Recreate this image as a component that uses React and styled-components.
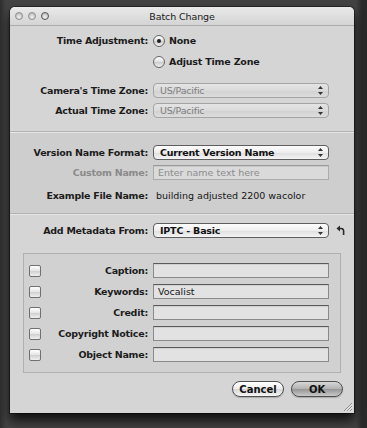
import React from 'react';
import styled, { createGlobalStyle } from 'styled-components';

const Global = createGlobalStyle`
  html, body { margin: 0; padding: 0; }
  body {
    width: 367px; height: 428px; overflow: hidden;
    background: #3a3a3a;
    font-family: "DejaVu Sans", "Liberation Sans", sans-serif;
  }
`;

const Screen = styled.div`
  width: 367px; height: 428px; box-sizing: border-box;
  padding: 7px 0 0 10px;
  background: linear-gradient(90deg, #2e2e2e 0px, #424242 6px, #424242 356px, #2a2a2a 362px);
`;

const Window = styled.div`
  position: relative;
  width: 344px; height: 406px;
  display: flex; flex-direction: column;
  background: #d5d5d5;
  border-radius: 5px 5px 0 0;
  box-shadow: 0 7px 12px rgba(0,0,0,0.8), 0 0 0 1px rgba(0,0,0,0.4);
  overflow: hidden;
`;

const TitleBar = styled.div`
  height: 18px;
  display: grid; grid-template-columns: 1fr auto 1fr; align-items: center;
  background: linear-gradient(#e9e9e9, #d4d4d4);
  border-bottom: 1px solid #adadad;
`;

const Lights = styled.div`
  display: flex; gap: 5px; padding-left: 5px;
`;

const Light = styled.span`
  width: 8px; height: 8px; border-radius: 50%;
  box-sizing: border-box;
  border: 1px solid ${p => (p.$dark ? '#555' : '#8c8c8c')};
  background: radial-gradient(circle at 50% 70%, #f4f4f4, #c2c2c2 70%);
`;

const Title = styled.div`
  font-size: 9.5px; color: #1a1a1a; letter-spacing: -0.1px;
`;

const Section = styled.div`
  display: flex; flex-direction: column;
  padding: ${p => p.$pad};
  background: ${p => p.$bg || '#d5d5d5'};
  border-top: ${p => (p.$divided ? '1px solid #b2b2b2' : 'none')};
  box-shadow: ${p => (p.$divided ? 'inset 0 1px 0 #e6e6e6' : 'none')};
  flex: ${p => (p.$grow ? 1 : 'none')};
`;

const Row = styled.div`
  display: flex; align-items: center; gap: 5px;
  height: 15px;
  margin-top: ${p => p.$mt || 0}px;
`;

const Label = styled.div`
  width: ${p => p.$w || 138}px; flex-shrink: 0;
  text-align: right; white-space: nowrap;
  font-size: 9.5px; font-weight: bold; letter-spacing: -0.25px;
  color: ${p => (p.$disabled ? '#8a8a8a' : '#1c1c1c')};
`;

const RadioWrap = styled.div`
  display: flex; align-items: center; gap: 4px;
  font-size: 9.5px; font-weight: bold; color: #1c1c1c; letter-spacing: -0.2px;
`;

const RadioDot = styled.span`
  width: 12px; height: 12px; border-radius: 50%; box-sizing: border-box;
  border: 1px solid #666;
  background: linear-gradient(#ffffff, #e0e0e0 50%, #c9c9c9 51%, #f2f2f2);
  display: flex; align-items: center; justify-content: center;
  &::after {
    content: '';
    width: 4px; height: 4px; border-radius: 50%;
    background: #1e1e1e;
    display: ${p => (p.$on ? 'block' : 'none')};
  }
`;

const Popup = styled.div`
  width: 176px; height: 15px; box-sizing: border-box;
  display: flex; align-items: center; justify-content: space-between;
  padding: 0 5px 0 6px;
  border: 1px solid ${p => (p.$disabled ? '#a4a4a4' : '#5e5e5e')};
  border-radius: 4px;
  background: ${p => (p.$disabled
    ? 'linear-gradient(#e4e4e4, #dadada 50%, #d2d2d2 51%, #dcdcdc)'
    : 'linear-gradient(#fdfdfd, #eeeeee 50%, #dedede 51%, #f4f4f4)')};
  font-size: 9.5px; letter-spacing: -0.2px;
  font-weight: ${p => (p.$bold ? 'bold' : 'normal')};
  color: ${p => (p.$disabled ? '#7e7e7e' : '#121212')};
  white-space: nowrap;
`;

const Field = styled.div`
  width: 176px; height: 15px; box-sizing: border-box;
  display: flex; align-items: center;
  padding: 0 4px;
  border: 1px solid ${p => (p.$disabled ? '#ababab' : '#8a8a8a')};
  border-top-color: ${p => (p.$disabled ? '#9a9a9a' : '#5a5a5a')};
  background: ${p => (p.$disabled ? '#dadada' : '#e2e2e2')};
  box-shadow: inset 0 1px 0 rgba(0,0,0,0.08);
  font-size: 9.5px;
  color: ${p => (p.$placeholder ? '#8c8c8c' : '#161616')};
  white-space: nowrap;
`;

const Value = styled.div`
  font-size: 9.5px; color: #161616; padding-left: 3px; white-space: nowrap;
`;

const Group = styled.div`
  margin: 15px 0 0 13px;
  width: 318px; box-sizing: border-box;
  display: flex; flex-direction: column; gap: 6px;
  padding: 9px 0 10px 5px;
  border: 1px solid #b0b0b0;
  background: #d1d1d1;
`;

const GroupRow = styled.div`
  display: flex; align-items: center; gap: 5px; height: 15px;
`;

const Check = styled.span`
  width: 12px; height: 12px; box-sizing: border-box; flex-shrink: 0;
  margin-right: -5px;
  border: 1px solid #707070; border-radius: 2px;
  background: linear-gradient(#ffffff, #e4e4e4 50%, #cfcfcf 51%, #f0f0f0);
`;

const Buttons = styled.div`
  display: flex; justify-content: flex-end; gap: 7px;
  margin-top: 8px; padding-right: 11px;
`;

const Button = styled.div`
  width: 52px; height: 16px; box-sizing: border-box;
  border-radius: 8px;
  border: 1px solid #4f4f4f;
  display: flex; align-items: center; justify-content: center;
  font-size: 10px; font-weight: bold; color: #111;
  background: ${p => (p.$default
    ? 'linear-gradient(#d8d8d8, #b0b0b0 50%, #959595 51%, #c9c9c9)'
    : 'linear-gradient(#ffffff, #ececec 50%, #d6d6d6 51%, #f6f6f6)')};
  box-shadow: 0 1px 1px rgba(0,0,0,0.2);
`;

const Grip = styled.svg`
  position: absolute; right: 1px; bottom: 1px;
`;

const Revert = styled.svg`
  margin-left: 2px; flex-shrink: 0;
`;

const Arrows = () => (
  <svg width="5" height="9" viewBox="0 0 5 9">
    <path d="M2.5 0 L5 3 L0 3 Z" fill="#333" />
    <path d="M0 6 L5 6 L2.5 9 Z" fill="#333" />
  </svg>
);

const metaRows = [
  ['Caption:', ''],
  ['Keywords:', 'Vocalist'],
  ['Credit:', ''],
  ['Copyright Notice:', ''],
  ['Object Name:', ''],
];

export default function App() {
  return (
    <Screen>
      <Global />
      <Window>
        <TitleBar>
          <Lights>
            <Light />
            <Light />
            <Light $dark />
          </Lights>
          <Title>Batch Change</Title>
          <span />
        </TitleBar>

        <Section $pad="7px 0 13px 0">
          <Row>
            <Label>Time Adjustment:</Label>
            <RadioWrap><RadioDot $on />None</RadioWrap>
          </Row>
          <Row $mt={6}>
            <Label />
            <RadioWrap><RadioDot />Adjust Time Zone</RadioWrap>
          </Row>
          <Row $mt={14}>
            <Label>Camera's Time Zone:</Label>
            <Popup $disabled>US/Pacific<Arrows /></Popup>
          </Row>
          <Row $mt={5}>
            <Label>Actual Time Zone:</Label>
            <Popup $disabled>US/Pacific<Arrows /></Popup>
          </Row>
        </Section>

        <Section $divided $bg="#cecece" $pad="13px 0 10px 0">
          <Row>
            <Label>Version Name Format:</Label>
            <Popup $bold>Current Version Name<Arrows /></Popup>
          </Row>
          <Row $mt={5}>
            <Label $disabled>Custom Name:</Label>
            <Field $disabled $placeholder>Enter name text here</Field>
          </Row>
          <Row $mt={8}>
            <Label>Example File Name:</Label>
            <Value>building adjusted 2200 wacolor</Value>
          </Row>
        </Section>

        <Section $divided $grow $pad="9px 0 0 0">
          <Row>
            <Label>Add Metadata From:</Label>
            <Popup $bold>IPTC - Basic<Arrows /></Popup>
            <Revert width="9" height="11" viewBox="0 0 9 11">
              <path d="M0.5 3.5 L4 0.5 L4 6.5 Z" fill="#2a2a2a" />
              <path d="M3.5 3.5 H5 A2.6 2.6 0 0 1 7.6 6.1 V10" fill="none" stroke="#2a2a2a" strokeWidth="1.6" />
            </Revert>
          </Row>
          <Group>
            {metaRows.map(([label, val]) => (
              <GroupRow key={label}>
                <Check />
                <Label $w={107}>{label}</Label>
                <Field>{val}</Field>
              </GroupRow>
            ))}
          </Group>
          <Buttons>
            <Button>Cancel</Button>
            <Button $default>OK</Button>
          </Buttons>
        </Section>

        <Grip width="11" height="11" viewBox="0 0 11 11">
          <path d="M10 2 L2 10 M10 5 L5 10 M10 8 L8 10" stroke="#8a8a8a" strokeWidth="1" />
          <path d="M10.5 2.8 L2.8 10.5 M10.5 5.8 L5.8 10.5 M10.5 8.8 L8.8 10.5" stroke="#f4f4f4" strokeWidth="0.8" />
        </Grip>
      </Window>
    </Screen>
  );
}
